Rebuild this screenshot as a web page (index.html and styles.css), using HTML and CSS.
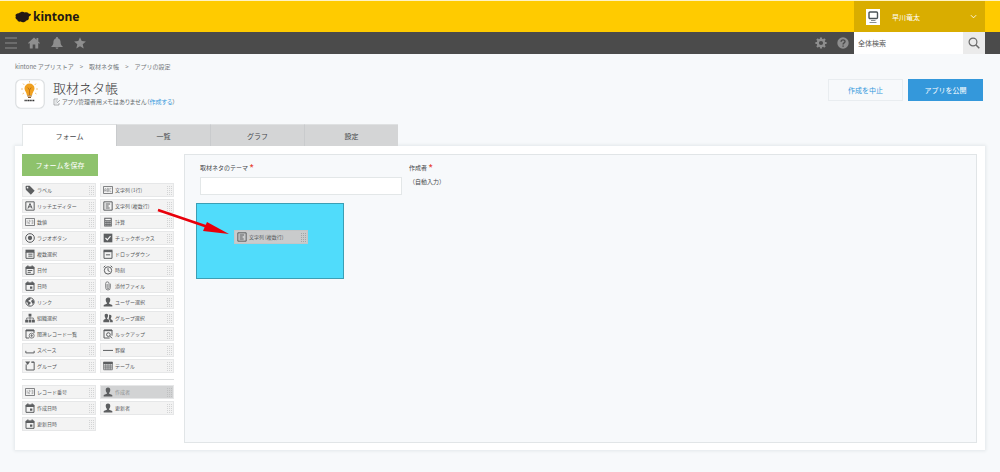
FILE: index.html
```html
<!DOCTYPE html>
<html lang="ja">
<head>
<meta charset="utf-8">
<title>取材ネタ帳 - アプリの設定</title>
<link rel="stylesheet" href="styles.css">
</head>
<body>
<svg class="sprite" aria-hidden="true">
  <symbol id="i-tag" viewBox="0 0 12 12"><path fill="currentColor" fill-rule="evenodd" d="M.6 1.800 1.600.8l4 .2 6 6-4.600 4.600L1 5.800zM3 2.200a1 1 0 1 0 .1 2 1 1 0 0 0-.1-2z"/></symbol>
  <symbol id="i-abc" viewBox="0 0 12 12"><path class="hair" d="M.6 1.800h10.800v8.400H.6z"/><path class="faint" d="M2 8V5.200L2.800 4l.8 1.200V8M2 6.400h1.600M5 4v4h1.500V4zM5 6h1.500M10 4H8.200v4H10"/></symbol>
  <symbol id="i-rich" viewBox="0 0 12 12"><path class="ln" d="M1 1h10v10H1z"/><path class="ln" d="m3.500 9 2.500-6 2.500 6M4.300 7h3.400"/></symbol>
  <symbol id="i-multi" viewBox="0 0 12 12"><path class="ln" d="M1 1h10v10H1zM3.200 3.600h5.300M3.200 6h3.600M3.200 8.400h4.800"/></symbol>
  <symbol id="i-num" viewBox="0 0 12 12"><path class="hair" d="M.6 1.800h10.800v8.400H.6z"/><path class="faint" d="M2.600 4v4M4.400 4H6v2H4.400v2H6M7.800 4h1.700v4H7.800M7.800 6h1.700"/></symbol>
  <symbol id="i-calc" viewBox="0 0 12 12"><path fill="currentColor" fill-rule="evenodd" d="M1.500.8h9v10.600h-9zM2.700 2v2h6.600V2zM2.800 5.200v1h1.400v-1zm2.500 0v1h1.400v-1zm2.500 0v1h1.400v-1zm-5 2v1h1.400v-1zm2.500 0v1h1.400v-1zm2.500 0v1h1.400v-1zm-5 2v1h1.400v-1zm2.500 0v1h1.400v-1zm2.500 0v1h1.400v-1z"/></symbol>
  <symbol id="i-radio" viewBox="0 0 12 12"><circle class="ln" cx="6" cy="6" r="5.200"/><circle cx="6" cy="6" r="2.600" fill="currentColor"/></symbol>
  <symbol id="i-check" viewBox="0 0 12 12"><path fill="currentColor" d="M.8.8h10.400v10.400H.8z"/><path d="m3 6 2.200 2.300L9 3.800" fill="none" stroke="#f3f3f3" stroke-width="1.400"/></symbol>
  <symbol id="i-mselect" viewBox="0 0 12 12"><path class="ln" d="M1.200 3.600h9.600v7.600H1.200zM4 6.200h5M4 8.600h5"/><path fill="currentColor" d="M.6.8h10.800v3.400H.6z"/></symbol>
  <symbol id="i-drop" viewBox="0 0 12 12"><path class="ln" d="M1.200 3h9.600v8.200H1.200zM3.500 7h5"/><path fill="currentColor" d="M.6.8h10.800v3H.6z"/></symbol>
  <symbol id="i-date" viewBox="0 0 12 12"><path class="ln" d="M1.200 2.400h9.600v8.800H1.200zM3.200 6.600h5.600M3.200 8.800h3.800"/><path fill="currentColor" d="M1 2h10v2.800H1zM2.600.5h1.600v2H2.600zM7.800.5h1.600v2H7.800z"/></symbol>
  <symbol id="i-datetime" viewBox="0 0 12 12"><path class="ln" d="M1.200 2.400h9.600v8.800H1.200z"/><path fill="currentColor" d="M1 2h10v2.800H1zM2.600.5h1.600v2H2.600zM7.800.5h1.600v2H7.800zM6 6.600h2.800v2.800H6z"/></symbol>
  <symbol id="i-clock" viewBox="0 0 12 12"><circle class="ln" cx="6" cy="6.500" r="4.400"/><path class="ln" d="M6 3.800v3l2 1M.7 2.800 2.800.9M11.300 2.800 9.200.9"/></symbol>
  <symbol id="i-clip" viewBox="0 0 12 12"><path class="hair" d="M8.800 3.200V8a2.800 2.800 0 0 1-5.600 0V3a2 2 0 0 1 4 0v5a1.100 1.100 0 0 1-2.200 0V3.600"/></symbol>
  <symbol id="i-globe" viewBox="0 0 12 12"><circle class="ln" cx="6" cy="6" r="5"/><path fill="currentColor" d="M1.500 3.500 5 1l1.800.6-.6 1.600-2 .8.2 1.400 2 .6.6 1.600-1.600 1.200-.4 2L3.600 9l-.4-2.200L1 5zM8.400 3.200l2.200 1 .4 2.400-1.600 2-1-1.600L7.300 5z"/></symbol>
  <symbol id="i-user" viewBox="0 0 12 12"><path fill="currentColor" d="M6 .6c2 0 2.900 1.300 2.700 3.200C8.600 5.300 8 6.300 7.300 6.900v1.200c1.200.6 3.400.8 3.900 1.900v1.500H.8V10c.5-1.100 2.700-1.300 3.900-1.900V6.900C4 6.300 3.400 5.300 3.300 3.800 3.100 1.900 4 .6 6 .6z"/></symbol>
  <symbol id="i-org" viewBox="0 0 12 12"><path fill="currentColor" d="M4.300.8h3.400v3.400H4.300zM.2 8h3.400v3.400H.2zM4.300 8h3.400v3.400H4.300zM8.400 8h3.400v3.400H8.400z"/><path class="hair" d="M6 4v4M2 8V6h8v2"/></symbol>
  <symbol id="i-group" viewBox="0 0 12 12"><path fill="currentColor" d="M4 1c1.500 0 2.200 1 2 2.600-.1 1.200-.5 2-1 2.400v1.200C6 7.700 7.300 8 7.600 9v2.200H.4V9c.3-1 1.600-1.300 2.600-1.800V6c-.5-.4-.9-1.200-1-2.400C1.800 2 2.500 1 4 1zM8.300 2c1.400 0 2 .9 1.900 2.300-.1 1-.5 1.800-.9 2.200v1c.8.5 2 .8 2.400 1.700v2H8.500V9c-.3-.8-1-1.200-1.800-1.600.4-1 .7-2 .6-5.200z"/></symbol>
  <symbol id="i-related" viewBox="0 0 12 12"><path class="ln" d="M10.800 5V1.200H1.200v9.600H5"/><path fill="currentColor" d="M1 1h10v1.800H1z"/><circle class="hair" cx="8" cy="8" r="3"/><path class="hair" d="M6.500 8h3M8 6v4"/></symbol>
  <symbol id="i-lookup" viewBox="0 0 12 12"><path class="ln" d="M10.800 8V1.200H1.200v9.600H8"/><path fill="currentColor" d="M1 1h10v1.600H1z"/><circle class="ln" cx="6.500" cy="6.700" r="2.200"/><path class="ln" d="m8.200 8.500 2.600 2.600"/></symbol>
  <symbol id="i-space" viewBox="0 0 12 12"><path class="ln" d="M1 7v2.500h10V7"/></symbol>
  <symbol id="i-line" viewBox="0 0 12 12"><path class="ln" d="M0 6.500h12"/></symbol>
  <symbol id="i-box" viewBox="0 0 12 12"><path class="ln" d="M7.500 1.400H11v9.400H1.400V4M8 1.400h3"/><path fill="currentColor" d="M.2.6h6L3.200 4.800z"/></symbol>
  <symbol id="i-table" viewBox="0 0 12 12"><path class="hair" d="M.8 1.500h10.400v9H.8zM.8 6h10.400M.8 8.300h10.400M3.400 3v7.500M6 3v7.500M8.600 3v7.500"/><path fill="currentColor" d="M.4 1h11.200v2.800H.4z"/></symbol>
</svg>

<header class="topbar">
  <a class="brand" href="#">
    <svg class="brand-mark" viewBox="0 0 28 20" aria-hidden="true"><path d="M1.500 9C-.5 6 3 3 7 3.500 10 .5 14 0 17 2c4-1.500 7 .5 7 2.500 2-.5 4 0 4 1 0 2-3 2.500-4 4.500 1 3-1 5.500-4 6-2.500 3.500-7 4-10 2-3.500 1-6-1-6-3-2.500-1-4-3.500-2.500-6z"/></svg>
    <span>kintone</span>
  </a>
  <button class="account" type="button">
    <svg class="avatar" viewBox="0 0 14 16" aria-hidden="true"><path fill="#fff" d="M0 0h14v16H0z"/><rect x="3" y="3" width="8.500" height="6.500" rx="1" fill="#fff" stroke="#4b5358" stroke-width="1.400"/><path d="M5 11.500h4.500M3.500 13.500h7" stroke="#8a9094" stroke-width="1"/></svg>
    <span>早川竜太</span>
    <svg class="chevron" viewBox="0 0 8 5" aria-hidden="true"><path d="m1 1 3 3 3-3" fill="none" stroke="#fff"/></svg>
  </button>
</header>

<nav class="toolbar" aria-label="グローバル">
  <div class="tools">
    <button type="button" aria-label="メニュー"><svg viewBox="0 0 12 12"><path d="M0 1h12M0 6h12M0 11h12" stroke="currentColor" stroke-width="1"/></svg></button>
    <button type="button" aria-label="ホーム"><svg viewBox="0 0 12 12"><path fill="currentColor" d="M6 .5 8.500 2.800V1h1.800v3.400L12 6l-.8.800-1-.8v5.500H7.300V7.500H4.700v4H1.800V6l-1 .8L0 6z"/></svg></button>
    <button type="button" aria-label="通知"><svg viewBox="0 0 12 12"><path fill="currentColor" d="M6 0c.8 0 1 .6 1 1.200C9 2 9.600 3.500 9.600 5.500c0 2 .8 3 2 3.800v.7H.4v-.7c1.200-.8 2-1.800 2-3.800C2.400 3.500 3 2 5 1.200 5 .6 5.200 0 6 0zM4.500 10.500h3c-.2.900-.7 1.300-1.500 1.300s-1.300-.4-1.500-1.300z"/></svg></button>
    <button type="button" aria-label="お気に入り"><svg viewBox="0 0 12 12"><path fill="currentColor" d="m6 .2 1.700 3.900 4.200.4-3.200 2.800 1 4.200L6 9.300l-3.700 2.200 1-4.200L.1 4.500l4.200-.4z"/></svg></button>
  </div>
  <div class="tools tools-end">
    <button type="button" aria-label="設定"><svg viewBox="0 0 12 12"><circle cx="6" cy="6" r="3.200" fill="none" stroke="currentColor" stroke-width="2.200"/><path d="M6 .4v2M6 9.600v2M.4 6h2M9.600 6h2M2 2l1.400 1.400M8.600 8.600 10 10M10 2 8.600 3.400M3.400 8.600 2 10" stroke="currentColor" stroke-width="2.200"/></svg></button>
    <button type="button" aria-label="ヘルプ"><svg viewBox="0 0 12 12"><circle cx="6" cy="6" r="5.700" fill="currentColor"/><path d="M4.100 4.700c0-2.500 3.900-2.400 3.900-.2C8 5.900 6.100 5.900 6.100 7.500M6.100 8.400v1.400" fill="none" stroke="#4b4b4b" stroke-width="1.400"/></svg></button>
  </div>
  <form class="search" role="search">
    <input type="search" placeholder="全体検索" aria-label="全体検索">
    <button type="button" aria-label="検索"><svg viewBox="0 0 12 12"><circle cx="5" cy="5" r="3.900" fill="none" stroke="currentColor" stroke-width="1.200"/><path d="m7.800 7.800 3.500 3.500" stroke="currentColor" stroke-width="1.500"/></svg></button>
  </form>
</nav>

<main class="page">
  <nav class="crumbs" aria-label="パンくず">
    <a href="#">kintone アプリストア</a><span>&gt;</span><a href="#">取材ネタ帳</a><span>&gt;</span><a href="#">アプリの設定</a>
  </nav>

  <section class="app-head">
    <svg class="app-icon" viewBox="0 0 30 30" aria-hidden="true"><rect x=".75" y=".75" width="28.500" height="28.500" rx="5" fill="#fff" stroke="#dcdfe1" stroke-width="1.200"/><path d="M14.500 2v1.500M8 4.500 9.300 6M21 4.500 19.700 6M6 10h2M21 10h2M7.500 15l1.500-1M21.500 15l-1.500-1" stroke="#edb45e" stroke-width=".8"/><path fill="#f0a01f" d="M14.500 4.500a5 5 0 0 1 5 5c0 2.300-2 3.500-2.500 7h-5c-.5-3.500-2.500-4.700-2.500-7a5 5 0 0 1 5-5z"/><path d="m12.800 8.500 1.700 2.500 1.700-2.500M14.500 11v5" fill="none" stroke="#b8701a" stroke-width=".9"/><path fill="#8c5a1f" d="M12.300 16.500h4.400v1h-4.400zM13 18h3v1h-3z"/><path d="M9.500 21.500h10" stroke="#333" stroke-width="1.700" stroke-dasharray="1.300 .4"/></svg>
    <div class="app-title">
      <h1>取材ネタ帳</h1>
      <p><svg viewBox="0 0 8 8" aria-hidden="true"><path d="M5 1H1v6h5V5M2.500 3h2M2.500 5h1M4 5l3-3" fill="none" stroke="#8c9194" stroke-width=".7"/></svg>アプリ管理者用メモはありません（<a href="#">作成する</a>）</p>
    </div>
    <div class="actions">
      <button class="btn btn-plain" type="button">作成を中止</button>
      <button class="btn btn-primary" type="button">アプリを公開</button>
    </div>
  </section>

  <div class="tabs" role="tablist">
    <button role="tab" aria-selected="true" type="button">フォーム</button>
    <button role="tab" aria-selected="false" type="button">一覧</button>
    <button role="tab" aria-selected="false" type="button">グラフ</button>
    <button role="tab" aria-selected="false" type="button">設定</button>
  </div>

  <section class="panel">
    <aside class="palette">
      <button class="btn btn-save" type="button">フォームを保存</button>
      <div class="parts">
        <button class="part" type="button"><svg><use href="#i-tag"/></svg>ラベル</button>
        <button class="part" type="button"><svg><use href="#i-abc"/></svg>文字列 (1行)</button>
        <button class="part" type="button"><svg><use href="#i-rich"/></svg>リッチエディター</button>
        <button class="part" type="button"><svg><use href="#i-multi"/></svg>文字列 (複数行)</button>
        <button class="part" type="button"><svg><use href="#i-num"/></svg>数値</button>
        <button class="part" type="button"><svg><use href="#i-calc"/></svg>計算</button>
        <button class="part" type="button"><svg><use href="#i-radio"/></svg>ラジオボタン</button>
        <button class="part" type="button"><svg><use href="#i-check"/></svg>チェックボックス</button>
        <button class="part" type="button"><svg><use href="#i-mselect"/></svg>複数選択</button>
        <button class="part" type="button"><svg><use href="#i-drop"/></svg>ドロップダウン</button>
        <button class="part" type="button"><svg><use href="#i-date"/></svg>日付</button>
        <button class="part" type="button"><svg><use href="#i-clock"/></svg>時刻</button>
        <button class="part" type="button"><svg><use href="#i-datetime"/></svg>日時</button>
        <button class="part" type="button"><svg><use href="#i-clip"/></svg>添付ファイル</button>
        <button class="part" type="button"><svg><use href="#i-globe"/></svg>リンク</button>
        <button class="part" type="button"><svg><use href="#i-user"/></svg>ユーザー選択</button>
        <button class="part" type="button"><svg><use href="#i-org"/></svg>組織選択</button>
        <button class="part" type="button"><svg><use href="#i-group"/></svg>グループ選択</button>
        <button class="part" type="button"><svg><use href="#i-related"/></svg>関連レコード一覧</button>
        <button class="part" type="button"><svg><use href="#i-lookup"/></svg>ルックアップ</button>
        <button class="part" type="button"><svg><use href="#i-space"/></svg>スペース</button>
        <button class="part" type="button"><svg><use href="#i-line"/></svg>罫線</button>
        <button class="part" type="button"><svg><use href="#i-box"/></svg>グループ</button>
        <button class="part" type="button"><svg><use href="#i-table"/></svg>テーブル</button>
      </div>
      <hr>
      <div class="parts">
        <button class="part" type="button"><svg><use href="#i-num"/></svg>レコード番号</button>
        <button class="part part-used" type="button" disabled><svg><use href="#i-user"/></svg>作成者</button>
        <button class="part" type="button"><svg><use href="#i-datetime"/></svg>作成日時</button>
        <button class="part" type="button"><svg><use href="#i-user"/></svg>更新者</button>
        <button class="part" type="button"><svg><use href="#i-datetime"/></svg>更新日時</button>
      </div>
    </aside>

    <div class="canvas">
      <div class="fields">
        <div class="field">
          <label for="theme">取材ネタのテーマ <b>*</b></label>
          <input id="theme" type="text">
        </div>
        <div class="field">
          <span class="field-name">作成者 <b>*</b></span>
          <span class="auto">（自動入力）</span>
        </div>
      </div>
      <div class="dropzone">
        <button class="part part-drag" type="button"><svg><use href="#i-multi"/></svg>文字列 (複数行)</button>
      </div>
    </div>

    <svg class="arrow" viewBox="0 0 72 30" aria-hidden="true"><path d="M1 5 51 22" stroke="#e8000b" stroke-width="2.600"/><path fill="#e8000b" d="m50 17 22 12-26-3z"/></svg>
  </section>
</main>
</body>
</html>
```

FILE: styles.css
```css
* { box-sizing: border-box; }

body {
  margin: 0;
  background: #f7f9fb;
  color: #434649;
  font-family: "Noto Sans CJK JP", "Noto Sans", sans-serif;
  font-size: 6px;
  line-height: 10px;
}

button, input { font: inherit; color: inherit; margin: 0; padding: 0; border: 0; border-radius: 0; background: none; }
button { cursor: pointer; }
a { color: inherit; text-decoration: none; }
svg { display: block; flex: none; }
.sprite { position: absolute; width: 0; height: 0; }
.ln { fill: none; stroke: currentColor; stroke-width: 1.2; }
.hair { fill: none; stroke: currentColor; stroke-width: 0.9; }
.faint { fill: none; stroke: currentColor; stroke-width: 0.5; }

.topbar {
  display: flex;
  justify-content: space-between;
  height: 32px;
  padding: 0 15px;
  background: #ffcb00;
  border-top: 1px solid #fff3c4;
}
.brand {
  display: flex;
  align-items: center;
  gap: 2px;
  color: #231815;
  font: bold 12px/16px "Noto Sans", sans-serif;
}
.brand-mark { width: 16px; height: 12px; fill: #231815; }
.account {
  display: flex;
  align-items: center;
  width: 131px;
  padding: 0 8px 0 12px;
  background: #d9ad00;
  color: #fff;
  font-size: 7px;
}
.avatar { width: 14px; height: 16px; margin-right: 12px; }
.chevron { width: 7px; height: 5px; margin-left: auto; }

.toolbar {
  display: flex;
  height: 22px;
  padding: 0 15px 0 5px;
  background: #4b4b4b;
  color: #8e8e8e;
}
.tools { display: flex; align-items: center; gap: 10px; }
.tools:first-child { gap: 11px; }
.tools svg { width: 12px; height: 12px; }
.tools-end { margin-left: auto; margin-right: 5px; }
.search { display: flex; width: 131px; background: #fff; }
.search input { flex: 1; min-width: 0; padding: 0 4px; color: #555; font-size: 7px; outline: 0; }
.search input::placeholder { color: #555; opacity: 1; }
.search button { display: grid; place-items: center; width: 22px; background: #ebebeb; color: #6a6a6a; }
.search svg { width: 12px; height: 12px; }

.page { padding: 8px 15px 21px; }
.crumbs { display: flex; gap: 6px; color: #73777a; }

.app-head { display: flex; gap: 8px; margin-top: 7px; }
.app-icon { width: 30px; height: 30px; }
.app-title h1 { margin: 0; color: #333; font-size: 13px; font-weight: 300; line-height: 17px; }
.app-title p { display: flex; margin: 1px 0 0; color: #666b6e; font-feature-settings: "palt"; }
.app-title p svg { width: 8px; height: 8px; margin: 1px 1px 0 0; }
.app-title a { color: #3498db; }
.actions { display: flex; gap: 5px; margin-left: auto; padding-right: 2px; }
.btn { height: 22px; font-size: 7px; }
.actions .btn { width: 75px; }
.btn-plain { border: 1px solid #e9edf0; color: #3498db; }
.btn-primary { background: #3498db; color: #fff; }
.btn-save { align-self: flex-start; width: 76px; background: #8ec26c; color: #fff; }

.tabs { position: relative; z-index: 1; display: flex; margin-top: 15px; padding-left: 7px; }
.tabs button {
  width: 94px;
  height: 22px;
  background: #d4d5d6;
  border-top: 1px solid #dfe1e2;
  border-left: 1px solid #c9cbcd;
  font-size: 7px;
}
.tabs [aria-selected="true"] { background: #fff; border-left-color: #e3e7e8; }

.panel {
  position: relative;
  display: flex;
  gap: 10px;
  padding: 8px 8px 7px 7px;
  background: #fff;
  box-shadow: 0 0 3px 1px #e2e7ea;
}

.palette { display: flex; flex-direction: column; width: 152px; flex: none; }
.parts { display: grid; grid-template-columns: 1fr 1fr; gap: 2px 4px; }
.btn-save + .parts { margin-top: 7px; }
.palette hr { align-self: stretch; height: 1px; margin: 6px 0 5px; border: 0; background: #dcdedf; }
.part {
  --grip: #d3d4d5;
  display: flex;
  align-items: center;
  gap: 2px;
  height: 14px;
  padding: 0 1px 0 2px;
  border: 1px solid #e6e7e8;
  background: #f3f3f3;
  color: #55585a;
  font-size: 5px;
  line-height: 8px;
}
.part svg { width: 10px; height: 10px; color: #5c5e60; }
.part::after {
  content: "";
  width: 5px;
  height: 9px;
  margin-left: auto;
  background: conic-gradient(var(--grip) 25%, transparent 0 75%, var(--grip) 0) 0 0 / 2px 2px;
  background: repeating-linear-gradient(to bottom, transparent 0 1px, #f3f3f3 1px 2px), repeating-linear-gradient(to right, var(--grip) 0 1px, transparent 1px 2px);
}
.part-used { --grip: #bfc0c1; background: #d2d3d4; color: #8f9193; cursor: default; }
.part-used::after { background: repeating-linear-gradient(to bottom, transparent 0 1px, #d2d3d4 1px 2px), repeating-linear-gradient(to right, var(--grip) 0 1px, transparent 1px 2px); }
.part-drag { --grip: #a3a5a6; width: 74px; border-color: #c3c5c6; background: #c9cbcc; }
.part-drag::after { background: repeating-linear-gradient(to bottom, transparent 0 1px, #c9cbcc 1px 2px), repeating-linear-gradient(to right, var(--grip) 0 1px, transparent 1px 2px); }

.canvas {
  flex: 1;
  min-height: 289px;
  padding: 8px 11px;
  border: 1px solid #e1e5e7;
  background: #f7f9fb;
}
.fields { display: flex; gap: 7px; padding-left: 4px; }
.field { display: flex; flex-direction: column; gap: 4px; }
.field b { color: #e74c3c; font-size: 10px; font-weight: 500; line-height: 8px; vertical-align: -2px; }
.field label, .field-name { height: 10px; }
.field input { width: 202px; height: 18px; padding: 0 4px; border: 1px solid #e3e7e8; background: #fff; }
.dropzone {
  display: flex;
  justify-content: center;
  width: 148px;
  height: 76px;
  margin-top: 8px;
  padding: 26px 0 0 2px;
  border: 1px solid #3b9fb5;
  background: #50dcfb;
}

/* Drag direction, drawn over the palette and the canvas */
.arrow { position: absolute; left: 142px; top: 59px; width: 72px; height: 30px; }
```
